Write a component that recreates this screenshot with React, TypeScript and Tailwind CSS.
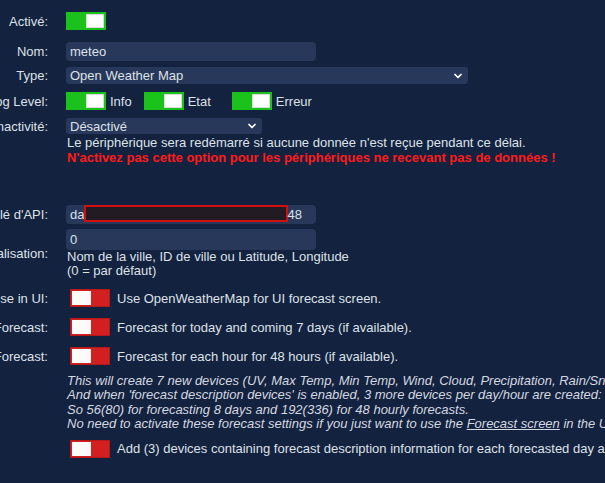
import { ChevronDown } from 'lucide-react';

function GreenToggle() {
    return (
        <span className="inline-flex w-[40px] h-[18px] bg-[#1cc21c] items-center justify-end pr-[2px] shrink-0">
            <span className="w-[18px] h-[14px] bg-white border border-[#dcdcdc]" />
        </span>
    );
}

function RedToggle() {
    return (
        <span className="inline-flex w-[40px] h-[18px] bg-[#d21f1f] border border-[#b41818] items-center pl-[1px] shrink-0">
            <span className="w-[19px] h-[14px] bg-[#fffafa]" />
        </span>
    );
}

function Row({ label, children, className = '' }: { label?: string; children: React.ReactNode; className?: string }) {
    return (
        <div className={`flex items-center ${className}`}>
            <div className="w-[48px] shrink-0 flex justify-end">
                <span className="whitespace-nowrap">{label}</span>
            </div>
            <div className="ml-[18px] flex-1 min-w-0">{children}</div>
        </div>
    );
}

export default function App() {
    return (
        <div className="w-[605px] h-[483px] overflow-hidden bg-[#13223f] text-[#dde1e8] text-[13px] leading-[15px] font-['Liberation_Sans',Arial,sans-serif]">
            <div className="flex flex-col pt-[12px]">
                <Row label="Activé:">
                    <GreenToggle />
                </Row>

                <Row label="Nom:" className="mt-[11px]">
                    <div className="w-[250px] h-[19px] rounded-[4px] bg-[#28385a] pl-[4px] flex items-center">meteo</div>
                </Row>

                <Row label="Type:" className="mt-[6px]">
                    <div className="w-[402px] h-[17px] rounded-[3px] bg-[#28385a] pl-[4px] pr-[4px] flex items-center justify-between">
                        <span>Open Weather Map</span>
                        <ChevronDown size={12} strokeWidth={3.5} className="text-white" />
                    </div>
                </Row>

                <Row label="Log Level:" className="mt-[8px]">
                    <div className="flex items-center">
                        <GreenToggle />
                        <span className="ml-[4px] mr-[12px]">Info</span>
                        <GreenToggle />
                        <span className="ml-[4px] mr-[21px]">Etat</span>
                        <GreenToggle />
                        <span className="ml-[4px]">Erreur</span>
                    </div>
                </Row>

                <Row label="Inactivité:" className="mt-[8px]">
                    <div className="w-[196px] h-[16px] rounded-[3px] bg-[#28385a] pl-[4px] pr-[4px] flex items-center justify-between">
                        <span>Désactivé</span>
                        <ChevronDown size={12} strokeWidth={3.5} className="text-white" />
                    </div>
                </Row>

                <Row className="mt-[1px]">
                    <div className="whitespace-nowrap pl-[1px]">
                        <div>Le périphérique sera redémarré si aucune donnée n'est reçue pendant ce délai.</div>
                        <div className="font-bold text-[#ff1a1a]">N'activez pas cette option pour les périphériques ne recevant pas de données !</div>
                    </div>
                </Row>

                <Row label="Clé d'API:" className="mt-[40px]">
                    <div className="w-[250px] h-[19px] rounded-[4px] bg-[#28385a] pl-[4px] flex items-center">
                        <span>da</span>
                        <span className="w-[204px] h-[17px] self-start bg-[#221b24] border-2 border-[#d20f0f]" />
                        <span className="-ml-[1px]">48</span>
                    </div>
                </Row>

                <Row label="Localisation:" className="mt-[5px]">
                    <div className="w-[250px] h-[21px] rounded-[4px] bg-[#28385a] pl-[4px] flex items-center">0</div>
                    <div className="pl-[1px] leading-[14px] whitespace-nowrap">
                        <div>Nom de la ville, ID de ville ou Latitude, Longitude</div>
                        <div>(0 = par défaut)</div>
                    </div>
                </Row>

                <Row label="Use in UI:" className="mt-[11px]">
                    <div className="flex items-center pl-[4px]">
                        <RedToggle />
                        <span className="ml-[7px] whitespace-nowrap">Use OpenWeatherMap for UI forecast screen.</span>
                    </div>
                </Row>

                <Row label="Daily Forecast:" className="mt-[11px]">
                    <div className="flex items-center pl-[4px]">
                        <RedToggle />
                        <span className="ml-[7px] whitespace-nowrap">Forecast for today and coming 7 days (if available).</span>
                    </div>
                </Row>

                <Row label="Hourly Forecast:" className="mt-[11px]">
                    <div className="flex items-center pl-[4px]">
                        <RedToggle />
                        <span className="ml-[7px] whitespace-nowrap">Forecast for each hour for 48 hours (if available).</span>
                    </div>
                </Row>

                <Row className="mt-[9px]">
                    <div className="italic whitespace-nowrap pl-[1px] leading-[14.4px] text-[#d4d8e0]">
                        <div>This will create 7 new devices (UV, Max Temp, Min Temp, Wind, Cloud, Precipitation, Rain/Snow, Barometer).</div>
                        <div>And when 'forecast description devices' is enabled, 3 more devices per day/hour are created: Weather, Description, Icon.</div>
                        <div>So 56(80) for forecasting 8 days and 192(336) for 48 hourly forecasts.</div>
                        <div>
                            No need to activate these forecast settings if you just want to use the <span className="underline">Forecast screen</span> in the UI.
                        </div>
                    </div>
                </Row>

                <Row className="mt-[8px]">
                    <div className="flex items-center pl-[4px]">
                        <RedToggle />
                        <span className="ml-[7px] whitespace-nowrap">Add (3) devices containing forecast description information for each forecasted day and hour.</span>
                    </div>
                </Row>
            </div>
        </div>
    );
}
